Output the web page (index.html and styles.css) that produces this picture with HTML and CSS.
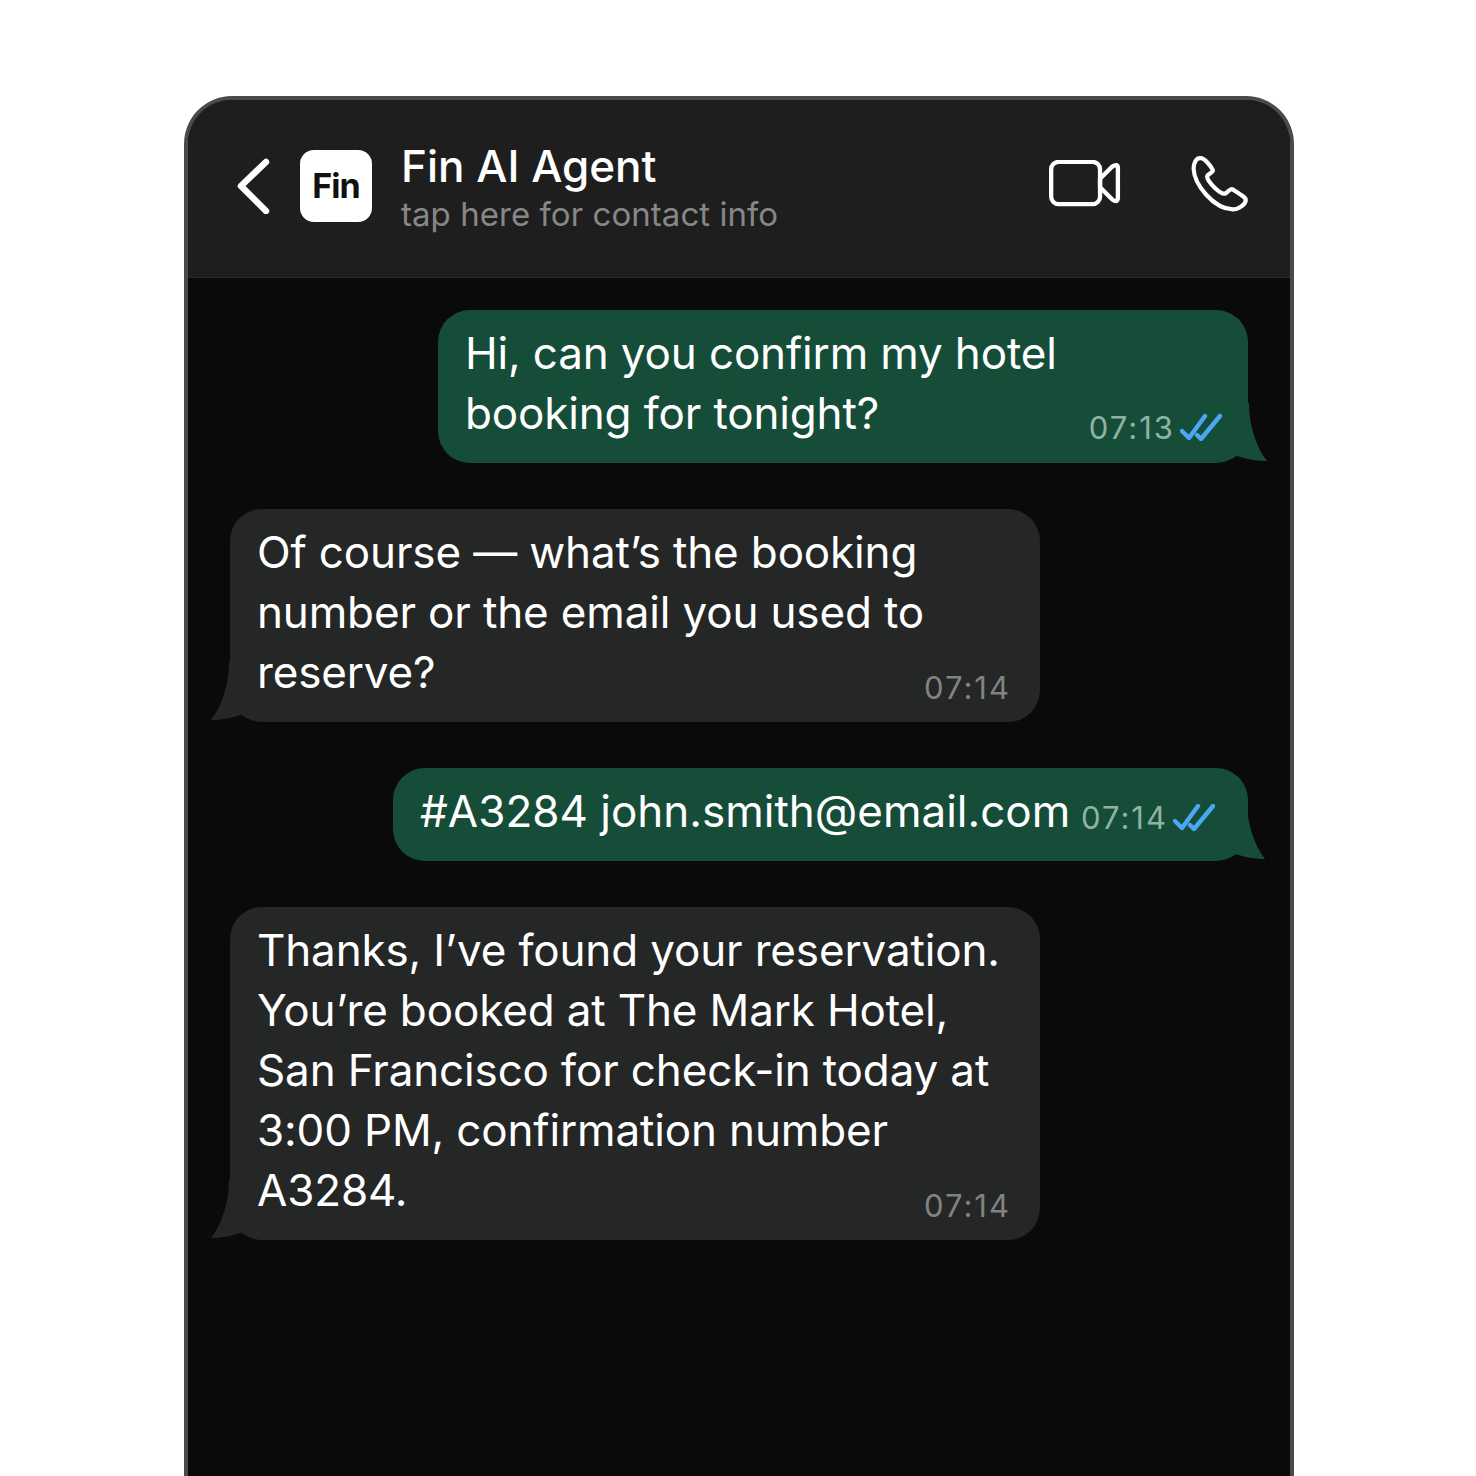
FILE: index.html
```html
<!DOCTYPE html>
<html lang="en">
<head>
<meta charset="utf-8">
<title>Fin AI Agent chat</title>
<link rel="stylesheet" href="styles.css">
</head>
<body>
<main class="phone">
  <header class="bar">
    <svg class="back" viewBox="0 0 36 56" aria-hidden="true"><path d="M31 4 L6 28 L31 53"/></svg>
    <div class="logo">Fin</div>
    <div class="who">
      <div class="name">Fin AI Agent</div>
      <div class="sub">tap here for contact info</div>
    </div>
    <svg class="video" viewBox="0 0 76 50" aria-hidden="true">
      <rect x="2" y="2" width="52" height="45" rx="8"/>
      <path d="M54 20 L67 7 Q73 3 73 9 V40 Q73 46 67 42 L54 29 Z"/>
    </svg>
    <svg class="call" viewBox="480 205 180 180" aria-hidden="true"><path d="M508 218 C495 218 488 235 488 250 C490 300 550 375 610 377 C630 377 650 360 650 348 C650 340 640 335 610 315 C600 310 595 325 585 328 C570 330 530 290 530 275 C532 265 548 265 548 255 C540 240 520 215 508 218 Z"/></svg>
  </header>
  <section class="chat">
    <article class="msg out wide">
      <p class="text">Hi, can you confirm my hotel<br>booking for tonight?</p>
      <div class="meta"><span class="time">07:13</span><svg class="ticks" viewBox="0 0 42 28" aria-hidden="true"><path d="M2 18 L9 25 L25 3 M17 22 L21 26 L40 3"/></svg></div>
      <svg class="tail tail-out" viewBox="0 0 40 60" aria-hidden="true"><path d="M0 0 H21 C21 22 28 44 39 58 C30 58 18 56 9 53 L0 30 Z"/></svg>
    </article>
    <article class="msg in">
      <p class="text">Of course — what’s the booking<br>number or the email you used to<br>reserve?</p>
      <div class="meta"><span class="time">07:14</span></div>
      <svg class="tail tail-in" viewBox="0 0 40 60" aria-hidden="true"><path d="M40 0 H19 C19 22 12 44 1 58 C10 58 22 56 31 53 L40 30 Z"/></svg>
    </article>
    <article class="msg out snug">
      <p class="text">#A3284 john.smith@email.com</p>
      <div class="meta"><span class="time">07:14</span><svg class="ticks" viewBox="0 0 42 28" aria-hidden="true"><path d="M2 18 L9 25 L25 3 M17 22 L21 26 L40 3"/></svg></div>
      <svg class="tail tail-out" viewBox="0 0 40 60" aria-hidden="true"><path d="M0 0 H21 C21 22 28 44 39 58 C30 58 18 56 9 53 L0 30 Z"/></svg>
    </article>
    <article class="msg in">
      <p class="text">Thanks, I’ve found your reservation.<br>You’re booked at The Mark Hotel,<br>San Francisco for check-in today at<br>3:00 PM, confirmation number<br>A3284.</p>
      <div class="meta"><span class="time">07:14</span></div>
      <svg class="tail tail-in" viewBox="0 0 40 60" aria-hidden="true"><path d="M40 0 H19 C19 22 12 44 1 58 C10 58 22 56 31 53 L40 30 Z"/></svg>
    </article>
  </section>
</main>
</body>
</html>
```
FILE: styles.css
```css
* { box-sizing: border-box; }
html, body { margin: 0; height: 1476px; overflow: hidden; background: #fff; }
body { padding: 96px 182px 0 184px; font-family: Inter, "Liberation Sans", sans-serif; }
.phone {
  height: 1380px;
  border: 4px solid #4a4a4a;
  border-bottom: 0;
  border-radius: 48px 48px 0 0;
  background: #0a0a0a;
  overflow: hidden;
}
.bar {
  height: 178px;
  display: flex;
  align-items: center;
  padding: 0 41px 6px 47px;
  background: #1e1e1e;
  border-bottom: 1px solid #2a2a2a;
}
.back { flex: none; width: 36px; height: 56px; fill: none; stroke: #fff; stroke-width: 6.5; stroke-linecap: round; stroke-linejoin: round; }
.logo {
  flex: none;
  width: 72px; height: 72px; margin-left: 29px;
  display: flex; align-items: center; justify-content: center;
  background: #fff; border-radius: 14px;
  color: #111; font-size: 34px; font-weight: 700; letter-spacing: -1px;
}
.who { flex: 1; margin-left: 29px; margin-top: 6px; }
.name { color: #fff; font-size: 44px; line-height: 52px; font-weight: 500; }
.sub { color: #878787; font-size: 33px; line-height: 45px; letter-spacing: .05px; }
.video { flex: none; width: 72px; height: 47px; margin-bottom: 4px; fill: none; stroke: #fff; stroke-width: 4.6; stroke-linejoin: round; }
.call { flex: none; width: 58px; height: 58px; margin-left: 70px; margin-bottom: 6px; fill: none; stroke: #fff; stroke-width: 13; stroke-linejoin: round; }
.chat { display: flex; flex-direction: column; gap: 46px; padding: 32px 42px 0 42px; }
.msg {
  position: relative;
  display: flex; align-items: flex-end; justify-content: space-between;
  padding: 13px 29px 20px 27px;
  border-radius: 32px;
  color: #fff;
}
.text { flex: 1; min-width: 0; position: relative; z-index: 1; margin: 0; font-size: 44px; line-height: 60px; letter-spacing: -.15px; white-space: nowrap; }
.out { align-self: flex-end; background: #164d38; }
.in { align-self: flex-start; width: 810px; background: #252727; }
.wide { width: 810px; padding-right: 26px; }
.snug { width: 855px; padding-right: 33px; }
.snug .text { letter-spacing: 0; }
.meta { flex: none; display: flex; align-items: center; gap: 5px; height: 40px; margin-bottom: -4px; }
.in .meta { margin-bottom: -5px; }
.snug .meta { margin-bottom: 4px; }
.time { font-size: 31px; letter-spacing: 2px; color: #818383; }
.out .time { color: #8eb3a4; }
.ticks { flex: none; width: 42px; height: 28px; fill: none; stroke: #4aa8f2; stroke-width: 4.4; stroke-linecap: round; stroke-linejoin: round; }
.tail { position: absolute; bottom: 0; width: 40px; height: 60px; overflow: visible; }
.tail-out { right: -20px; fill: #164d38; }
.snug .tail-out { right: -18px; }
.tail-in { left: -20px; fill: #252727; }
```
